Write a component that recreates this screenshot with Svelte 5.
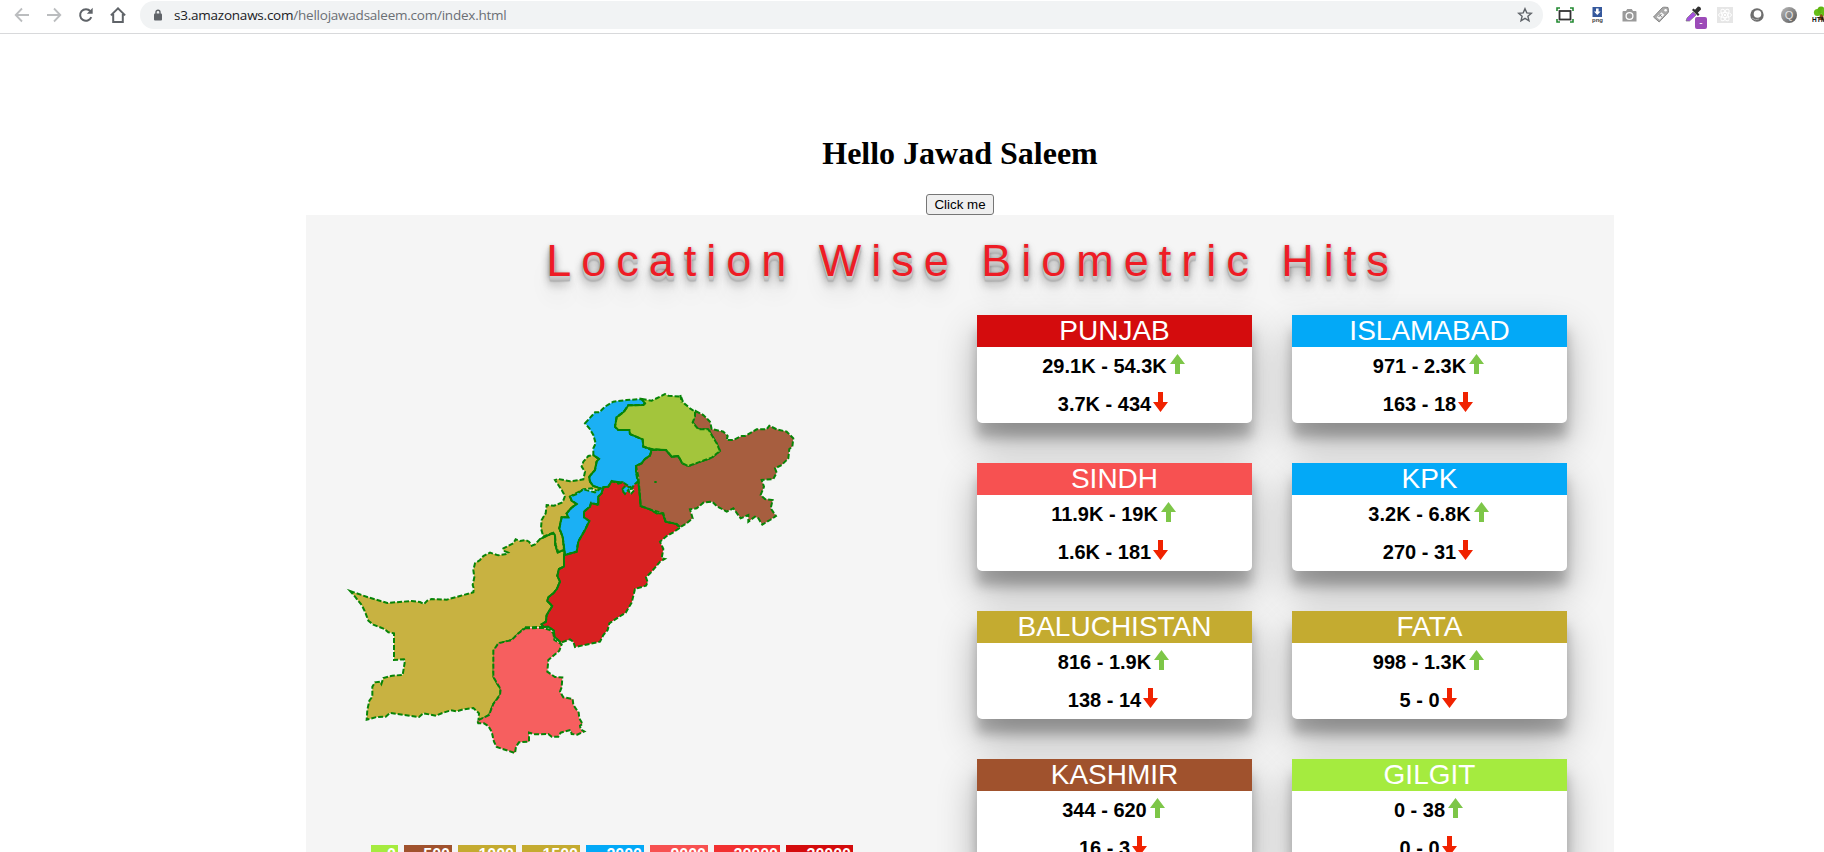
<script>
  const cards = [
    { name: 'PUNJAB', color: '#d40c0d', up: '29.1K - 54.3K', down: '3.7K - 434' },
    { name: 'ISLAMABAD', color: '#03a9f7', up: '971 - 2.3K', down: '163 - 18' },
    { name: 'SINDH', color: '#f75151', up: '11.9K - 19K', down: '1.6K - 181' },
    { name: 'KPK', color: '#03a9f7', up: '3.2K - 6.8K', down: '270 - 31' },
    { name: 'BALUCHISTAN', color: '#c4ab30', up: '816 - 1.9K', down: '138 - 14' },
    { name: 'FATA', color: '#c4ab30', up: '998 - 1.3K', down: '5 - 0' },
    { name: 'KASHMIR', color: '#a0522d', up: '344 - 620', down: '16 - 3' },
    { name: 'GILGIT', color: '#a5eb3f', up: '0 - 38', down: '0 - 0' }
  ];

  const legend = [
    { label: '0', color: '#a5eb3f', width: 27 },
    { label: '500', color: '#a0522d', width: 48 },
    { label: '1000', color: '#c4ab30', width: 58 },
    { label: '1500', color: '#c4ab30', width: 58 },
    { label: '2000', color: '#03a9f7', width: 58 },
    { label: '9000', color: '#f75151', width: 58 },
    { label: '20000', color: '#f23030', width: 66 },
    { label: '30000', color: '#d40c0d', width: 67 }
  ];

  // Outlines are kept in the local coordinates of three map sheets and moved into one space.
  const move = (dx, dy, text) =>
    text.trim().split(/\s+/).map((p) => {
      const [x, y] = p.split(',').map(Number);
      return `${x + dx},${y + dy}`;
    }).join(' ');
  const south = (t) => move(0, 600, t);
  const middle = (t) => move(360, 330, t);
  const north = (t) => move(570, 0, t);

  const punjabWest = '312,196 312,230 297,237 292,257 300,275 290,298 280,310 265,322 262,333 277,348 260,375 258,395 245,403 250,411';

  const regions = [
    {
      id: 'baluchistan', fill: '#c8b241',
      points: [
        south('30,33 85,52 142,69 215,63 240,66 252,72 262,62 275,57 320,59 360,48 400,37'),
        middle('40,305 42,297 38,285 43,262 40,240 45,220 60,210 70,198 90,188 115,196 140,192 145,188 130,182 130,175 160,160 167,148 180,153 197,150 207,155 215,167 225,163 240,147 262,137 280,128 285,135 286,165 293,187 315,178'),
        middle(punjabWest),
        middle('195,412 180,427 155,450 118,460 103,482 102,510'),
        south('460,290 470,308 482,327 480,345 460,372 447,405 415,425 417,400 400,384 370,388 350,394 333,391 310,398 288,407 250,400 237,411 150,399 137,410 110,411 80,419 82,390 88,362 97,350 97,320 105,307 120,305 124,312 130,294 157,287 188,285 195,242 192,238 162,240 162,160 145,157 133,147 100,134 85,122 75,95 65,75 45,50')
      ].join(' ')
    },
    {
      id: 'sindh', fill: '#f65f5f',
      points: south('555,145 610,144 630,150 640,160 643,180 665,193 658,212 625,240 622,275 645,291 667,292 665,322 660,335 670,352 698,357 700,375 716,398 718,415 728,432 720,437 722,448 733,454 712,464 695,462 692,450 662,458 655,470 635,470 625,462 585,463 567,458 567,485 537,487 528,500 525,519 470,501 462,485 455,455 445,438 432,430 415,430 412,422 447,405 460,372 480,345 482,327 470,308 460,290 460,212 475,190 515,180 535,160')
    },
    {
      id: 'fata', fill: '#c8b241',
      points: north('190,225 207,237 200,245 195,270 178,290 180,305 190,318 212,325 205,335 185,325 160,328 120,350 125,362 140,372 125,383 110,400 115,412 95,412 88,445 98,470 102,510 85,517 77,495 75,465 65,460 40,470 33,445 35,420 47,400 50,375 72,377 98,367 105,348 95,330 85,315 75,300 85,297 120,304 160,298 165,275 155,260 160,245 175,228')
    },
    {
      id: 'kpk', fill: '#1bb0f4',
      points: north('165,130 195,97 208,97 225,80 250,65 290,60 335,57 345,70 340,75 295,76 282,95 260,112 255,140 265,150 298,150 300,162 338,178 340,200 365,210 360,227 345,237 335,250 318,258 318,275 323,305 307,322 290,342 275,330 278,307 245,305 235,320 220,322 215,340 205,350 205,372 183,372 180,380 162,395 162,412 178,423 165,450 145,485 140,515 105,525 98,470 88,445 95,412 115,412 110,400 125,383 140,372 125,362 120,350 140,342 160,328 195,337 212,325 190,318 180,305 178,290 195,270 200,245 207,237 190,225 190,205 197,190 190,165 178,145')
    },
    {
      id: 'punjab', fill: '#d82121',
      points: [
        middle('250,411 265,410 282,422 283,440 303,458 330,448 340,455 345,471 420,455 430,435 443,420 448,400 475,382 497,368 515,338 525,297 558,287 563,277 558,262 575,245 600,215 614,207 605,205 610,177 600,155 620,138 640,127'),
        north('447,445 440,432 407,425 398,400 380,400 360,388 332,378 330,350 325,305 315,312 305,325 313,330 302,343 295,330 285,342 275,330 284,320 303,322 278,307 265,311 245,303 235,320 220,322 215,340 205,350 205,375 183,368 180,380 162,395 162,412 178,423 165,450 145,485 140,515 105,525'),
        middle(punjabWest)
      ].join(' ')
    },
    {
      id: 'kashmir', fill: '#a75e3f',
      points: north('497,93 520,105 540,125 545,147 580,155 593,168 590,180 610,180 635,168 645,168 680,148 710,148 718,137 740,148 770,155 790,175 787,200 778,207 775,235 755,255 735,265 740,278 730,297 695,300 702,320 692,345 705,357 728,360 722,385 738,408 720,420 697,434 685,415 675,410 655,425 655,405 632,415 610,385 590,395 560,378 547,365 520,368 500,385 480,388 488,415 470,430 450,442 440,432 407,425 400,400 360,388 332,378 330,350 325,290 318,258 335,250 345,237 360,227 365,210 408,210 425,230 445,228 457,250 475,258 525,240 545,233 570,213 560,190 535,148 505,148 488,127')
    },
    {
      id: 'gilgit', fill: '#a3c53c',
      points: north('335,57 365,62 390,50 405,42 415,47 453,50 460,68 480,85 495,95 495,110 488,127 505,148 535,148 545,165 560,190 570,213 545,233 525,240 475,258 457,250 445,228 425,230 408,210 395,210 365,207 340,200 338,178 300,162 298,150 265,150 255,140 260,112 282,95 295,76 340,75 345,70')
    }
  ];

  // Borders between neighbours: both outlines run here, so the line closes up.
  const shared = [
    middle('240,147 262,137 280,128 285,135 286,165 293,187 315,178'),
    middle(punjabWest + ' 265,410 282,422 283,440 303,458'),
    north('335,57 345,70 340,75 295,76 282,95 260,112 255,140 265,150 298,150 300,162 338,178 340,200 365,208 360,227 345,237 335,250 318,258 318,275 325,305 330,350 332,378 360,388 380,400 398,400 407,425 440,432 450,442'),
    north('278,307 245,304 235,320 220,322 215,340 205,350 205,373 183,370 180,380 162,395 162,412 178,423 165,450 145,485 140,515 105,525 98,470 88,445 95,412 115,412 110,400 125,383 140,372 125,362 120,350'),
    north('190,225 207,237 200,245 195,270 178,290 180,305 190,318 212,325'),
    north('365,208 408,210 425,230 445,228 457,250')
  ];
</script>

<div class="screen">
  <header class="toolbar">
    <nav class="nav">
      <svg width="16" height="16" viewBox="0 0 16 16" fill="none" stroke="#bbbdbf" stroke-width="1.8"><path d="M15 8H2M8 1.5 1.7 8 8 14.5" /></svg>
      <svg width="16" height="16" viewBox="0 0 16 16" fill="none" stroke="#bbbdbf" stroke-width="1.8"><path d="M1 8h13M8 1.5 14.3 8 8 14.5" /></svg>
      <svg width="16" height="16" viewBox="0 0 16 16" fill="none" stroke="#5f6368" stroke-width="2"><path d="M13.3 10.2A5.8 5.8 0 1 1 12.4 4.2" /><path d="M14.7.8v6H8.8z" fill="#5f6368" stroke="none" /></svg>
      <svg width="16" height="16" viewBox="0 0 16 16" fill="none" stroke="#5f6368" stroke-width="2"><path d="M.9 8.4 8 1.4l7.1 7M3.2 7v8h9.6V7" /></svg>
    </nav>
    <div class="address">
      <svg width="10" height="12" viewBox="0 0 10 12"><path d="M3 5V3.2a2 2 0 0 1 4 0V5" fill="none" stroke="#5f6368" stroke-width="1.4" /><rect x="1" y="4.5" width="8" height="7" rx="1" fill="#5f6368" /></svg>
      <span class="url"><b>s3.amazonaws.com</b>/hellojawadsaleem.com/index.html</span>
      <svg class="star" width="16" height="16" viewBox="0 0 16 16"><path d="m8 1.7 1.8 4.2 4.6.4-3.5 3 1.1 4.5L8 11.4l-4 2.4 1.1-4.5-3.5-3 4.6-.4z" fill="none" stroke="#5f6368" stroke-width="1.4" /></svg>
    </div>
    <div class="extensions">
      <svg viewBox="0 0 18 18"><rect x="3.5" y="5" width="11" height="8.5" fill="none" stroke="#333" stroke-width="1.8" /><path d="M1 5V2h3M14 2h3v3M17 13v3h-3M4 16H1v-3" fill="none" stroke="#238a32" stroke-width="1.6" /></svg>
      <svg viewBox="0 0 18 18"><rect x="4.5" y="1" width="9.5" height="10" fill="#35589c" /><path d="M8 2.5h2.6v3h2L9.3 9 6 5.5h2z" fill="#fff" /><text x="4" y="15.5" class="png">png</text></svg>
      <svg viewBox="0 0 18 18"><path d="M3.5 5H6l1.2-2h4.6L13 5h2.5q1 0 1 1v9.500h-14V6q0-1 1-1z" fill="#9a9a9a" /><circle cx="9.5" cy="10" r="3.4" fill="#9a9a9a" stroke="#fff" stroke-width="1.3" /></svg>
      <svg viewBox="0 0 18 18"><path d="m1.5 11 8.500-9q1-1 3-.8l3 .3.5 3.200q.2 1.400-.8 2.300L7.200 16z" fill="#aaa" stroke="#888" /><path d="m4.600 11.200 4.800-5 3 2.600-4.800 5z" fill="#f7f7f7" /><circle cx="13.6" cy="4.3" r="1.3" fill="#fff" /><path d="m6.500 11 3-3m-2 .7 2.300 2.200" stroke="#777" /></svg>
      <span class="picker">
        <svg viewBox="0 0 18 18"><path d="m2 15 1-3 6-6 3 3-6.500 6z" fill="#a64de0" stroke="#777" stroke-width=".7" /><path d="m8 4 6 6 1.500-1.500-1.700-1.700L17 3.500Q17 .5 14 .5l-3 3.200-1.500-1.200z" fill="#303030" /></svg>
        <i>-</i>
      </span>
      <svg viewBox="0 0 18 18"><rect x="1" y="1" width="16" height="16" fill="#e6e6e6" /><g fill="none" stroke="#fff"><ellipse cx="9" cy="9" rx="6.5" ry="2.5" /><ellipse cx="9" cy="9" rx="6.5" ry="2.5" transform="rotate(60 9 9)" /><ellipse cx="9" cy="9" rx="6.5" ry="2.5" transform="rotate(120 9 9)" /></g><circle cx="9" cy="9" r="1.2" fill="#fff" /></svg>
      <svg viewBox="0 0 18 18"><circle cx="9" cy="9" r="6.7" fill="#6e6e6e" /><circle cx="9.5" cy="8" r="3.8" fill="#fff" /><path d="M4 12q3 3 7 1" stroke="#aaa" fill="none" /></svg>
      <svg viewBox="0 0 18 18"><defs><linearGradient id="ball" x2="1" y2="1"><stop stop-color="#bbb" /><stop offset="1" stop-color="#555" /></linearGradient></defs><circle cx="9" cy="9" r="8" fill="url(#ball)" /><text x="4.8" y="13" class="q">Q</text></svg>
      <svg viewBox="0 0 18 18"><path d="M8 8h3l1 6H7z" fill="#8a4b16" /><circle cx="5.5" cy="6.5" r="3.6" fill="#67bd17" /><circle cx="9" cy="4" r="3.5" fill="#5db510" /><circle cx="13" cy="6" r="4" fill="#67bd17" /><text x="0" y="16" class="html">HTML</text></svg>
    </div>
  </header>

  <main>
    <h1>Hello Jawad Saleem</h1>
    <button>Click me</button>
    <section class="board">
      <h2>Location Wise Biometric Hits</h2>
      <div class="columns">
        <div class="left">
          <svg class="map" viewBox="0 0 1400 1140">
            {#each regions as region (region.id)}
              <polygon points={region.points} fill={region.fill} />
            {/each}
            {#each shared as line}
              <polyline points={line} />
            {/each}
            <path d="M943 306h7M1021 45l4 22" />
          </svg>
          <div class="legend">
            {#each legend as item}
              <span style="background:{item.color};width:{item.width}px">{item.label}</span>
            {/each}
          </div>
        </div>
        <div class="cards">
          {#each cards as card}
            <article>
              <h3 style="background:{card.color}">{card.name}</h3>
              <p>{card.up}<svg width="15" height="20" viewBox="0 0 15 20"><path d="M7.5 0 15 10h-5v10H5V10H0z" fill="#7dc648" /></svg></p>
              <p class="down">{card.down}<svg width="15" height="20" viewBox="0 0 15 20"><path d="M5 0h5v10h5L7.5 20 0 10h5z" fill="#f02200" /></svg></p>
            </article>
          {/each}
        </div>
      </div>
    </section>
  </main>
</div>

<style>
  :global(body) { background: #fff; }
  .screen { width: 1824px; height: 852px; overflow: hidden; }
  .toolbar {
    box-sizing: border-box; height: 34px; padding-top: 1px; display: flex; align-items: flex-start;
    border-bottom: 1px solid #d8d9db; overflow: hidden;
  }
  .nav { display: flex; gap: 16px; padding: 6px 14px 0; flex: none; }
  .address {
    box-sizing: border-box; display: flex; align-items: center; width: 1403px; height: 28px; flex: none;
    padding: 0 10px 0 13px; border-radius: 14px; background: #f1f3f4;
  }
  .url {
    flex: 1; margin-left: 11px; font: 13.5px/20px "Open Sans", sans-serif; letter-spacing: -0.23px; color: #6b6f74;
    white-space: nowrap;
  }
  .url b { font-weight: 400; color: #202124; }
  .extensions { display: flex; gap: 14px; margin-left: 13px; padding-top: 5px; flex: none; }
  .extensions svg { display: block; width: 18px; height: 18px; }
  .png { font: bold 6px "Liberation Sans", sans-serif; fill: #444; }
  .q { font: 11px "Liberation Sans", sans-serif; fill: #e4e4e4; }
  .html { font: bold 6.5px "Liberation Sans", sans-serif; fill: #111; }
  .picker { position: relative; }
  .picker i {
    position: absolute; left: 11px; top: 11px; width: 12px; height: 12px; border-radius: 2px;
    background: #9c4bb8; color: #fff; font: 10px/11px "Liberation Sans", sans-serif; text-align: center;
  }

  main { display: flex; flex-direction: column; align-items: center; width: 1308px; margin-left: 306px; padding-top: 101px; }
  h1 { margin: 0 0 22px; font: bold 32px/37px "Liberation Serif", serif; color: #000; }
  button {
    box-sizing: border-box; width: 68px; height: 21px; padding: 0; border: 1px solid #767676; border-radius: 3px;
    background: #efefef; color: #000; font: 13.333px "Liberation Sans", sans-serif;
  }
  .board { width: 1308px; background: #f5f5f5; font-family: "Liberation Sans", sans-serif; }
  h2 {
    margin: 0; padding: 20px 0 29px 25px; font-size: 45px; line-height: 51px; font-weight: 400; letter-spacing: 10px;
    text-align: center; color: #ee1c25;
    text-shadow: 0 1px 0 #ccc, 0 2px 0 #c9c9c9, 0 3px 0 #c4c4c4, 0 4px 0 #bfbfbf, 0 5px 0 #b4b4b4,
      0 6px 1px rgba(0, 0, 0, .1), 0 0 5px rgba(0, 0, 0, .1), 0 1px 3px rgba(0, 0, 0, .2),
      0 3px 5px rgba(0, 0, 0, .2), 0 5px 10px rgba(0, 0, 0, .25), 0 10px 10px rgba(0, 0, 0, .2),
      0 20px 20px rgba(0, 0, 0, .1);
  }
  .columns { display: flex; justify-content: space-between; align-items: flex-start; padding: 0 47px 0 34px; }
  .left { padding-top: 65px; }
  .map { display: block; width: 466.667px; height: 380px; }
  .map polygon, .map path { stroke: #078407; stroke-width: 6; stroke-dasharray: 15 6; }
  .map polyline { fill: none; stroke: #078407; stroke-width: 5.5; }
  .legend { display: flex; gap: 6px; margin: 85px 0 0 31px; }
  .legend span {
    box-sizing: border-box; height: 24px; padding: 1px 2px 0 0; color: #fff; font-size: 16px; font-weight: 700;
    line-height: 18px; text-align: right;
  }
  .cards { display: grid; grid-template-columns: 275px 275px; gap: 40px; }
  article {
    height: 108px; border-radius: 0 0 5px 5px; background: #fff;
    box-shadow: 0 19px 38px rgba(0, 0, 0, .3), 0 15px 12px rgba(0, 0, 0, .22);
  }
  h3 { margin: 0; height: 32px; font-size: 28px; line-height: 32px; font-weight: 400; text-align: center; color: #fff; }
  p { display: flex; justify-content: center; margin: 0; height: 38px; font-size: 20px; line-height: 38px; font-weight: 700; color: #000; }
  p svg { margin: 7px 2px 0 3px; }
  .down svg { margin: 7px 3px 0 2px; }
</style>
